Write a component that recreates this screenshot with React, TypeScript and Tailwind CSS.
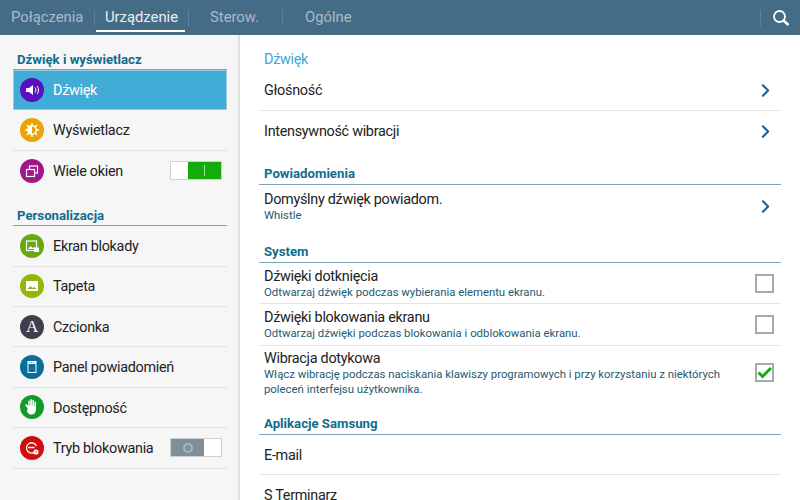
import { ChevronRight } from "lucide-react";
import type { ReactNode } from "react";

function IconCircle({ color, children }: { color: string; children: ReactNode }) {
  return (
    <div className={`w-6 h-6 rounded-full flex items-center justify-center shrink-0 ${color}`}>
      <svg className="w-6 h-6" viewBox="0 0 24 24" fill="none">
        {children}
      </svg>
    </div>
  );
}

function Toggle({ on }: { on: boolean }) {
  if (on) {
    return (
      <div className="ml-auto mr-[5px] flex w-[52px] h-[19px] border border-[#d0d0d0] bg-white">
        <div className="w-[17px]" />
        <div className="flex-1 bg-[#15ab0b] flex items-center justify-center">
          <div className="w-px h-[11px] bg-[#a5e29f]" />
        </div>
      </div>
    );
  }
  return (
    <div className="ml-auto mr-[5px] flex w-[52px] h-[19px] border border-[#d0d0d0] bg-white">
      <div className="w-[33px] bg-[#7d8f9b] flex items-center justify-center">
        <div className="w-[10px] h-[10px] rounded-full border-2 border-[#a9b5bd]" />
      </div>
    </div>
  );
}

function SideRow({
  label,
  icon,
  right,
  selected,
  last,
}: {
  label: string;
  icon: ReactNode;
  right?: ReactNode;
  selected?: boolean;
  last?: boolean;
}) {
  return (
    <div
      className={`h-[40.4px] flex items-center gap-[9px] text-[14.4px] tracking-[-0.02em] whitespace-nowrap ${
        selected
          ? "pl-[6px] bg-[#41acd5] text-white border border-[#9cc9dd]"
          : `pl-[7px] text-[#222] ${last ? "" : "border-b border-[#e2e2e2]"}`
      }`}
    >
      {icon}
      <span className="pt-[2px]">{label}</span>
      {right}
    </div>
  );
}

function SideHeading({ children }: { children: string }) {
  return (
    <div className="h-[21px] pl-[4px] text-[13.2px] font-bold text-[#0f6d8d] border-b border-[#7fa5b5] leading-[22px]">
      {children}
    </div>
  );
}

function ContentHeading({ children }: { children: string }) {
  return (
    <div className="h-[22px] pl-[5px] text-[13.2px] font-bold text-[#0f6d8d] border-b border-[#7fa5b5] leading-[22px]">
      {children}
    </div>
  );
}

function Chevron() {
  return <ChevronRight className="ml-auto mr-[5px] w-[21px] h-[21px] text-[#0f63a5] shrink-0" strokeWidth={2.4} />;
}

function Check({ checked }: { checked?: boolean }) {
  return (
    <div className="ml-auto mr-[7px] w-[19px] h-[19px] border-2 border-[#a0abb3] shrink-0 flex items-center justify-center">
      {checked && (
        <svg className="w-[15px] h-[15px]" viewBox="0 0 15 15" fill="none">
          <path d="M1.500 7.500 L5.500 11.500 L14 3" stroke="#17a80d" strokeWidth="3" />
        </svg>
      )}
    </div>
  );
}

function Row({
  title,
  sub,
  right,
  height,
  border = true,
}: {
  title: string;
  sub?: ReactNode;
  right?: ReactNode;
  height: string;
  border?: boolean;
}) {
  return (
    <div className={`flex items-center pl-[5px] ${height} ${border ? "border-b border-[#e4e4e4]" : ""}`}>
      <div className="min-w-0">
        <div className="pt-[2px] text-[14.4px] tracking-[-0.02em] leading-[16px] text-[#222]">{title}</div>
        {sub && <div className="text-[11.35px] leading-[15px] text-[#1d5a72]">{sub}</div>}
      </div>
      {right}
    </div>
  );
}

const tabs = ["Połączenia", "Urządzenie", "Sterow.", "Ogólne"];

export default function App() {
  return (
    <div className="w-[800px] h-[500px] overflow-hidden flex flex-col bg-white font-['Roboto',sans-serif]">
      <header className="h-[35px] shrink-0 bg-[#446c87] flex items-center text-[14.8px] text-[#a9bbc7]">
        <div className="w-[94px] pl-[11px]">{tabs[0]}</div>
        <div className="w-px h-[16px] bg-[#5d8098]" />
        <div className="w-[93px] h-[35px] relative flex items-center justify-center text-[#e8eef2]">
          {tabs[1]}
          <div className="absolute left-[1px] right-[3px] bottom-[3px] h-[2px] bg-white" />
        </div>
        <div className="w-px h-[16px] bg-[#5d8098]" />
        <div className="w-[93px] pl-[21px]">{tabs[2]}</div>
        <div className="w-px h-[16px] bg-[#5d8098]" />
        <div className="pl-[22px]">{tabs[3]}</div>
        <div className="ml-auto w-px h-[16px] bg-[#5d8098]" />
        <div className="w-[39px] flex justify-center">
          <svg className="w-[18px] h-[18px]" viewBox="0 0 18 18" fill="none">
            <circle cx="7.500" cy="7.500" r="5.500" stroke="#fff" strokeWidth="1.800" />
            <path d="M11.500 11.500L16.500 16" stroke="#fff" strokeWidth="2.400" />
          </svg>
        </div>
      </header>

      <div className="flex flex-1 min-h-0">
        <aside className="w-[240px] shrink-0 bg-[#f6f6f6] border-r-2 border-[#e0e0e0] pl-[13px] pr-[11px] pt-[14px]">
          <SideHeading>Dźwięk i wyświetlacz</SideHeading>
          <SideRow
            label="Dźwięk"
            selected
            icon={
              <IconCircle color="bg-[#5a0fc0]">
                <path d="M6 10h3l4-3v10l-4-3H6z" fill="#fff" />
                <path d="M15 9.500c1.200 1.400 1.200 3.600 0 5M17 8c2 2.200 2 5.800 0 8" stroke="#fff" strokeWidth="1" />
              </IconCircle>
            }
          />
          <SideRow
            label="Wyświetlacz"
            icon={
              <IconCircle color="bg-[#e8a307]">
                <circle cx="12" cy="12" r="5" fill="#fff" />
                <path d="M12 5v14M5 12h14M7 7l10 10M17 7L7 17" stroke="#fff" strokeWidth="1.400" />
                <path d="M12 8.500a3.500 3.500 0 0 1 0 7z" fill="#e8a307" />
              </IconCircle>
            }
          />
          <SideRow
            label="Wiele okien"
            last
            right={<Toggle on />}
            icon={
              <IconCircle color="bg-[#a0168c]">
                <rect x="9.500" y="7" width="8" height="7" stroke="#fff" strokeWidth="1.200" />
                <rect x="6.500" y="10.500" width="8" height="7" fill="#a0168c" stroke="#fff" strokeWidth="1.200" />
              </IconCircle>
            }
          />

          <div className="mt-[14px]">
            <SideHeading>Personalizacja</SideHeading>
          </div>
          <SideRow
            label="Ekran blokady"
            icon={
              <IconCircle color="bg-[#67a80f]">
                <rect x="6.500" y="7" width="10" height="9.500" stroke="#fff" strokeWidth="1.200" />
                <path d="M8 15l2.500-3 2 2 1.500-1 1.500 2z" fill="#fff" />
                <rect x="14" y="13.500" width="5" height="4.500" fill="#fff" />
              </IconCircle>
            }
          />
          <SideRow
            label="Tapeta"
            icon={
              <IconCircle color="bg-[#93b70b]">
                <rect x="6" y="7" width="12" height="10" rx="0.500" fill="#fff" />
                <path d="M7.500 15l3-3 2 2 1.500-1 2.500 2z" fill="#93b70b" />
              </IconCircle>
            }
          />
          <SideRow
            label="Czcionka"
            icon={
              <div className="w-6 h-6 rounded-full bg-[#413d4e] flex items-center justify-center shrink-0 text-white text-[17px] font-['Liberation_Serif',serif]">
                A
              </div>
            }
          />
          <SideRow
            label="Panel powiadomień"
            icon={
              <IconCircle color="bg-[#0a6e9c]">
                <rect x="7.500" y="6" width="9" height="12" fill="#fff" />
                <rect x="8.500" y="9" width="7" height="8" fill="#0a6e9c" />
                <path d="M9 7.500h6" stroke="#0a6e9c" strokeWidth="0.800" strokeDasharray="1 1" />
              </IconCircle>
            }
          />
          <SideRow
            label="Dostępność"
            icon={
              <IconCircle color="bg-[#14992a]">
                <path
                  transform="translate(12 12) scale(1.250) translate(-11.500 -12)"
                  d="M8 13l-1.800-2.200c-.6-.8.5-1.500 1.100-.8L8.500 11.200V7.500c0-.9 1.200-.9 1.200 0V11h.4V6.300c0-.9 1.300-.9 1.300 0V11h.4V6.800c0-.9 1.300-.9 1.300 0V11.500h.4V8.200c0-.9 1.200-.9 1.200 0V14c0 2.500-1.500 4-3.500 4-2 0-2.800-1-3.700-2.500z"
                  fill="#fff"
                />
              </IconCircle>
            }
          />
          <SideRow
            label="Tryb blokowania"
            right={<Toggle on={false} />}
            icon={
              <IconCircle color="bg-[#d00d0d]">
                <path d="M15.500 15.500A5.200 5.200 0 1 1 16.500 10" stroke="#fff" strokeWidth="1.300" />
                <path d="M8 11.500h6.500" stroke="#fff" strokeWidth="1.500" />
                <circle cx="16" cy="16" r="2.600" fill="#fff" />
                <path d="M16 14.800V16h1" stroke="#d00d0d" strokeWidth="0.700" />
              </IconCircle>
            }
          />
        </aside>

        <main className="flex-1 min-w-0 pl-[19px] pr-[19px] pt-[14px]">
          <div className="pl-[5px] h-[21px] text-[14.4px] tracking-[-0.02em] leading-[21px] text-[#3fa8d0]">Dźwięk</div>
          <Row title="Głośność" height="h-[41px]" right={<Chevron />} />
          <Row title="Intensywność wibracji" height="h-[40px]" border={false} right={<Chevron />} />
          <div className="mt-[12px]">
            <ContentHeading>Powiadomienia</ContentHeading>
          </div>
          <Row title="Domyślny dźwięk powiadom." sub="Whistle" height="h-[43px]" border={false} right={<Chevron />} />
          <div className="mt-[13px]">
            <ContentHeading>System</ContentHeading>
          </div>
          <Row
            title="Dźwięki dotknięcia"
            sub="Odtwarzaj dźwięk podczas wybierania elementu ekranu."
            height="h-[41px]"
            right={<Check />}
          />
          <Row
            title="Dźwięki blokowania ekranu"
            sub="Odtwarzaj dźwięki podczas blokowania i odblokowania ekranu."
            height="h-[42px]"
            right={<Check />}
          />
          <Row
            title="Wibracja dotykowa"
            sub={
              <>
                Włącz wibrację podczas naciskania klawiszy programowych i przy korzystaniu z niektórych
                <br />
                poleceń interfejsu użytkownika.
              </>
            }
            height="h-[53px]"
            border={false}
            right={<Check checked />}
          />
          <div className="mt-[14px]">
            <ContentHeading>Aplikacje Samsung</ContentHeading>
          </div>
          <Row title="E-mail" height="h-[40px]" />
          <Row title="S Terminarz" height="h-[40px]" border={false} />
        </main>
      </div>
    </div>
  );
}
